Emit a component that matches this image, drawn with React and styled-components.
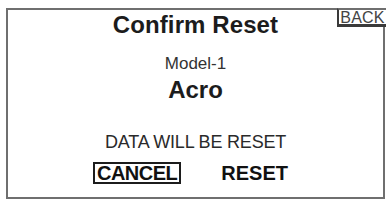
import React from "react";
import styled, { createGlobalStyle } from "styled-components";

// Estilo global da página
const GlobalStyle = createGlobalStyle`
  html, body {
    margin: 0;
    padding: 0;
    background: #ffffff;
    font-family: "Liberation Sans", Arial, sans-serif;
    color: #1c1c1c;
  }
`;

// Moldura do ecrã
const Screen = styled.div`
  position: relative;
  box-sizing: border-box;
  margin: 8px 0 0 6px;
  width: 379px;
  height: 191px;
  border: 2px solid #6f6f6f;
  display: flex;
  flex-direction: column;
  align-items: center;
  padding-top: 3px;
`;

// Aba "BACK" no canto
const BackTab = styled.div`
  position: absolute;
  top: -2px;
  right: -3px;
  box-sizing: border-box;
  width: 49px;
  height: 19px;
  border-left: 2px solid #3a3a3a;
  border-bottom: 3px solid #3a3a3a;
  border-top: 2px solid #6f6f6f;
  background: #fff;
  font-size: 16px;
  line-height: 14px;
  letter-spacing: 0.2px;
  color: #444;
  text-align: center;
  padding-top: 1px;
`;

// Título
const Title = styled.h1`
  margin: 0;
  font-size: 24px;
  line-height: 24px;
  font-weight: bold;
  letter-spacing: 0.1px;
`;

// Linha de texto com tamanho e espaço variáveis
const Line = styled.div`
  margin-top: ${(p) => p.$gap}px;
  font-size: ${(p) => p.$size}px;
  line-height: ${(p) => p.$size}px;
  font-weight: ${(p) => (p.$bold ? "bold" : "normal")};
  letter-spacing: ${(p) => p.$spacing || 0}px;
  color: ${(p) => p.$color || "#1c1c1c"};
`;

// Linha dos botões
const Actions = styled.div`
  margin-top: 11px;
  display: flex;
  align-items: center;
  gap: 36px;
  margin-left: -6px;
`;

// Botão de opção
const Option = styled.div`
  box-sizing: border-box;
  height: 22px;
  padding: 0 2px;
  display: flex;
  align-items: center;
  font-size: 20px;
  font-weight: bold;
  line-height: 20px;
  color: #111;
  border: 2px solid ${(p) => (p.$selected ? "#1c1c1c" : "transparent")};
  letter-spacing: ${(p) => (p.$selected ? "-0.5px" : "0")};
`;

const App = () => (
  <>
    <GlobalStyle />
    <Screen>
      <BackTab>BACK</BackTab>
      <Title>Confirm Reset</Title>
      <Line $gap={18} $size={17} $color="#333">Model-1</Line>
      <Line $gap={6} $size={24} $bold>Acro</Line>
      <Line $gap={31} $size={18} $spacing={-0.2} $color="#2a2a2a">DATA WILL BE RESET</Line>
      <Actions>
        <Option $selected>CANCEL</Option>
        <Option>RESET</Option>
      </Actions>
    </Screen>
  </>
);

export default App;
